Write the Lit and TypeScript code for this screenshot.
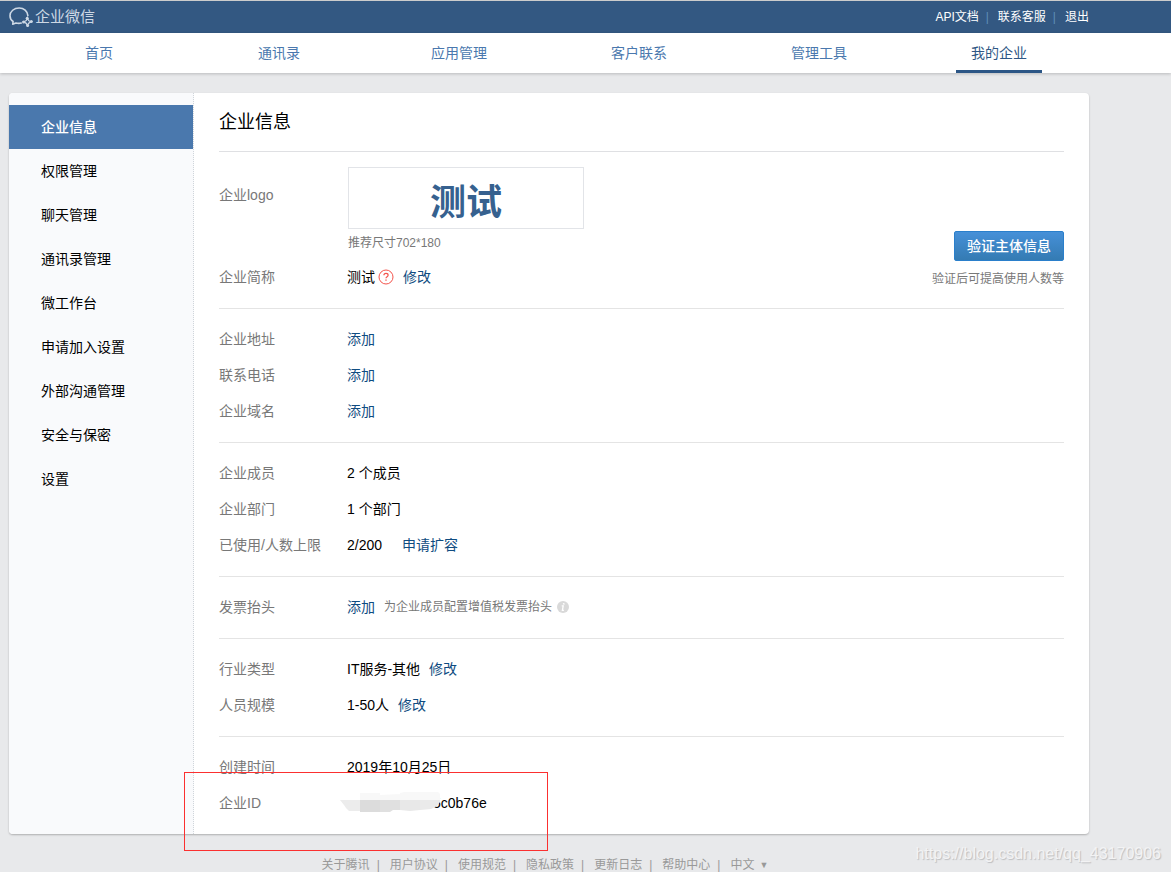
import { LitElement, html, css, svg, nothing, TemplateResult } from "lit";
import { customElement } from "lit/decorators.js";
import { classMap } from "lit/directives/class-map.js";

const NAV = ["首页", "通讯录", "应用管理", "客户联系", "管理工具", "我的企业"];
const SIDE = [
  "企业信息", "权限管理", "聊天管理", "通讯录管理", "微工作台",
  "申请加入设置", "外部沟通管理", "安全与保密", "设置",
];
const FOOTER = ["关于腾讯", "用户协议", "使用规范", "隐私政策", "更新日志", "帮助中心"];

interface Row {
  label: string;
  value?: string;
  action?: string;
  wide?: boolean;
  note?: string;
}

const GROUPS: Row[][] = [
  [
    { label: "企业地址", action: "添加" },
    { label: "联系电话", action: "添加" },
    { label: "企业域名", action: "添加" },
  ],
  [
    { label: "企业成员", value: "2 个成员" },
    { label: "企业部门", value: "1 个部门" },
    { label: "已使用/人数上限", value: "2/200", action: "申请扩容", wide: true },
  ],
  [{ label: "发票抬头", action: "添加", note: "为企业成员配置增值税发票抬头" }],
  [
    { label: "行业类型", value: "IT服务-其他", action: "修改" },
    { label: "人员规模", value: "1-50人", action: "修改" },
  ],
];

const brandIcon = svg`
  <svg class="brand-icon" viewBox="0 0 24 20" width="24" height="20" fill="none" stroke="currentColor" aria-hidden="true">
    <path stroke-width="1.6" stroke-linecap="round" stroke-linejoin="round"
      d="M18.900 8.600C18.500 4.200 14.900 1 10.200 1C5 1 1 4.400 1 8.700C1 11.300 2.200 13.200 4.100 14.500L3.700 17.300L6.900 16C8.800 16.500 10.700 16.500 12.200 16.100"/>
    <path stroke-width="1.300" d="M18.400 11.300C18.900 13.100 20 14.200 21.900 14.800C20 15.400 18.900 16.500 18.400 18.300C17.900 16.500 16.700 15.400 14.900 14.800C16.700 14.200 17.900 13.100 18.400 11.300z"/>
    <g fill="currentColor" stroke="none">
      <circle cx="18.200" cy="11.200" r="1.500"/>
      <circle cx="22.300" cy="14.600" r="1.500"/>
      <circle cx="18.600" cy="18.400" r="1.500"/>
      <circle cx="14.600" cy="15" r="1.500"/>
    </g>
  </svg>`;

const helpIcon = svg`
  <svg viewBox="0 0 16 16" width="16" height="16" fill="none" stroke="#f4544c" aria-hidden="true">
    <circle cx="8" cy="8" r="7"/>
    <path stroke-width="1.200" d="M5.900 6.300C5.900 5 6.800 4.400 8 4.400s2.100.7 2.100 1.800c0 1.500-2.100 1.500-2.100 3.100"/>
    <path stroke-width="1.300" d="M8 10.500v1.300"/>
  </svg>`;

const infoIcon = svg`
  <svg viewBox="0 0 12 12" width="12" height="12" aria-hidden="true">
    <circle cx="6" cy="6" r="6" fill="#d9d9d9"/>
    <path d="M6.900 2.200l-.3 1.300" stroke="#fff" stroke-width="1.700"/>
    <path d="M4.700 4.900h1.500l-.8 4.400h1.500" stroke="#fff" stroke-width="1.300" fill="none"/>
  </svg>`;

const smudge = svg`
  <svg class="smudge" viewBox="0 0 100 20" width="100" height="20" aria-hidden="true">
    <path fill="#f8f8f8" d="M20 1h20v7H20zM40 3l20-1v6H40zM60 1l4-1h34l2 2v6H60z"/>
    <path fill="#ececec" d="M0 8h20v11H9l-3-3-2-3z"/>
    <path fill="#dcdcdc" d="M20 8h20v12H20z"/>
    <path fill="#e0e0e0" d="M40 8h20v10h-7l-3 2H40z"/>
    <path fill="#e8e8e8" d="M60 8h20v10l-10 1-10-1z"/>
    <path fill="#eaeaea" d="M80 8h20v2l-3 4-6 3-11 1z"/>
  </svg>`;

@customElement("app-root")
export class AppRoot extends LitElement {
  static styles = css`
    :host {
      display: block;
      position: relative;
      min-height: 100vh;
      box-sizing: border-box;
      background: #e8e9eb;
      color: #000;
      font: 14px/20px "Liberation Sans", "Noto Sans CJK SC", sans-serif;
    }
    a { color: #0f4c81; text-decoration: none; }
    a:hover { text-decoration: underline; }
    button { font: inherit; cursor: pointer; }
    ul, dl, dd, h1 { margin: 0; padding: 0; list-style: none; }
    svg { flex: none; }
    .wrap { max-width: 1080px; margin-left: 9px; }

    .top { background: #335882; border-top: 1px solid #ccc; }
    .top-in { display: flex; justify-content: space-between; align-items: center; height: 32px; }
    .brand { display: flex; align-items: center; gap: 2px; font-size: 15px; color: #cdd8e5; }
    .links { display: flex; align-items: center; font-size: 12px; gap: 7px; }
    .links a { color: #fff; }
    .links i { font-style: normal; color: #5f8db8; padding-right: 2px; }

    .nav { background: #fff; box-shadow: 0 1px 3px rgba(0, 0, 0, 0.2); }
    .tabs { display: grid; grid-template-columns: repeat(6, 1fr); justify-items: center; }
    .tab { display: block; padding: 0 15px; line-height: 40px; height: 40px; color: #4a78ae; box-sizing: border-box; }
    .tab.on { color: #2f5785; border-bottom: 3px solid #2c5686; }

    .card {
      position: relative; display: flex; margin-top: 20px; background: #fff;
      border-radius: 4px; box-shadow: 0 1px 2px rgba(0, 0, 0, 0.25);
    }
    .side {
      flex: none; width: 184px; padding-top: 12px; background: #f9fafc;
      border-right: 1px dotted #d0d5da; border-radius: 4px 0 0 4px;
    }
    .side a { display: block; padding-left: 32px; line-height: 44px; color: #000; }
    .side a.on { background: #4a78ad; color: #fff; font-weight: 500; }

    .main { flex: 1; min-width: 0; padding: 0 25px; }
    .title { font-size: 18px; font-weight: 400; line-height: 58px; border-bottom: 1px solid #dfe0e3; }
    .group { padding: 12px 0 13px; border-bottom: 1px solid #e4e4e4; }
    .group.last { border-bottom: 0; }
    .group.first { display: flex; justify-content: space-between; padding-top: 15px; }
    .row { display: flex; min-height: 36px; line-height: 36px; }
    .row dt { flex: none; width: 128px; color: #787878; white-space: nowrap; }
    .row dd { display: flex; align-items: center; gap: 9px; white-space: nowrap; }
    .row dd.wide { gap: 20px; }
    .named { display: flex; align-items: center; gap: 3px; }
    .note { display: flex; align-items: center; gap: 5px; font-size: 12px; color: #787878; }
    .logo-row { display: flex; min-height: 92px; }
    .logo-row dt { flex: none; width: 129px; line-height: 56px; color: #787878; }
    .logo {
      display: flex; align-items: center; justify-content: center; width: 236px; height: 62px;
      box-sizing: border-box; border: 1px solid #e2e4e8; font-size: 36px; font-weight: 700; color: #36618f;
      padding-top: 9px;
    }
    .size { font-size: 12px; line-height: 28px; color: #787878; }
    .verify { display: flex; flex-direction: column; align-items: flex-end; justify-content: flex-end; gap: 8px; padding-bottom: 6px; font-size: 12px; color: #787878; }
    .cta {
      height: 30px; padding: 0 12px; border: 1px solid #2a7fcb; border-radius: 2px; color: #fff; font-size: 14px; font-weight: 500;
      background: linear-gradient(#4690d8, #347bb3); line-height: 28px;
    }
    .id { position: relative; padding-left: 86px; }
    .smudge { position: absolute; left: -7px; top: 7px; }
    .mark { position: absolute; left: 175px; bottom: -17px; width: 364px; height: 79px; box-sizing: border-box; border: 1px solid #fb3030; pointer-events: none; }

    .foot { display: flex; justify-content: center; margin-top: 24px; padding-right: 8px; box-sizing: border-box; font-size: 12px; line-height: 14px; color: #999; white-space: nowrap; }
    .foot a { color: #999; }
    .foot i { font-style: normal; padding: 0 10px 0 7px; }
    .lang { display: flex; align-items: center; gap: 5px; padding: 0; border: 0; background: none; color: #999; line-height: 14px; }
    .lang span { font-size: 9px; }
    .water { position: absolute; right: 10px; bottom: 8px; font-size: 16px; color: #f3f3f4; text-shadow: 1px 1px 1px #bcbdbf; pointer-events: none; }
  `;

  private row(r: Row): TemplateResult {
    return html`<div class="row">
      <dt>${r.label}</dt>
      <dd class=${classMap({ wide: !!r.wide })}>
        ${r.value ? html`<span>${r.value}</span>` : nothing}
        ${r.action ? html`<a href="#">${r.action}</a>` : nothing}
        ${r.note ? html`<span class="note">${r.note} ${infoIcon}</span>` : nothing}
      </dd>
    </div>`;
  }

  render() {
    return html`
      <header class="top">
        <div class="wrap top-in">
          <div class="brand">${brandIcon}<span>企业微信</span></div>
          <div class="links">
            <a href="#">API文档</a><i>|</i><a href="#">联系客服</a><i>|</i><a href="#">退出</a>
          </div>
        </div>
      </header>
      <nav class="nav">
        <div class="wrap tabs">
          ${NAV.map((t, i) => html`<a href="#" class=${classMap({ tab: true, on: i === 5 })}>${t}</a>`)}
        </div>
      </nav>
      <div class="wrap card">
        <nav class="side">
          ${SIDE.map((t, i) => html`<a href="#" class=${classMap({ on: i === 0 })}>${t}</a>`)}
        </nav>
        <main class="main">
          <h1 class="title">企业信息</h1>
          <div class="group first">
            <dl>
              <div class="logo-row">
                <dt>企业logo</dt>
                <dd>
                  <div class="logo">测试</div>
                  <div class="size">推荐尺寸702*180</div>
                </dd>
              </div>
              <div class="row">
                <dt>企业简称</dt>
                <dd><span class="named">测试${helpIcon}</span><a href="#">修改</a></dd>
              </div>
            </dl>
            <div class="verify">
              <button class="cta" type="button">验证主体信息</button>
              <span>验证后可提高使用人数等</span>
            </div>
          </div>
          ${GROUPS.map((g) => html`<dl class="group">${g.map((r) => this.row(r))}</dl>`)}
          <dl class="group last">
            ${this.row({ label: "创建时间", value: "2019年10月25日" })}
            <div class="row">
              <dt>企业ID</dt>
              <dd><span class="id">5c0b76e${smudge}</span></dd>
            </div>
          </dl>
        </main>
        <div class="mark"></div>
      </div>
      <footer class="wrap foot">
        ${FOOTER.map((t) => html`<a href="#">${t}</a><i>|</i>`)}
        <button class="lang" type="button" aria-haspopup="listbox">中文 <span>▼</span></button>
      </footer>
      <div class="water">https://blog.csdn.net/qq_43170906</div>
    `;
  }
}
